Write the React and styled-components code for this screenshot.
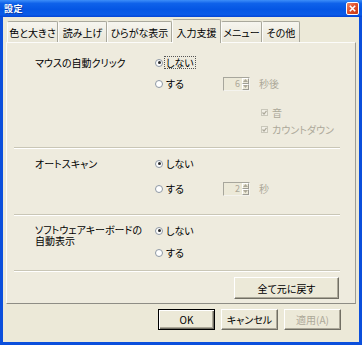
import React from 'react';
import styled, { createGlobalStyle, css } from 'styled-components';

const Global = createGlobalStyle`
  html, body { margin: 0; padding: 0; background: #ECE9D8; }
  body {
    font-family: "Noto Sans CJK JP", "Noto Sans", sans-serif;
    font-size: 10px;
    color: #000;
  }
  * { box-sizing: border-box; }
`;

const Window = styled.div`
  width: 362px;
  height: 345px;
  display: flex;
  flex-direction: column;
  background: #0B4FDC;
  font-feature-settings: "palt";
`;

const TitleBar = styled.div`
  height: 17px;
  flex: none;
  display: flex;
  align-items: center;
  justify-content: space-between;
  padding: 0 3px 0 4px;
  background: linear-gradient(to bottom, #3D8EF9 0%, #0F62EA 20%, #0556E4 55%, #0A5BE8 85%, #0444D4 100%);
`;

const Title = styled.span`
  color: #fff;
  font-size: 9px;
  font-weight: bold;
  letter-spacing: 0.5px;
  text-shadow: 1px 1px 0 #0B3AA8;
`;

const CloseButton = styled.div`
  width: 13px;
  height: 13px;
  border: 1px solid #fff;
  border-radius: 2px;
  background: linear-gradient(135deg, #F08A6A 0%, #E0512C 45%, #C93A12 100%);
  display: flex;
  align-items: center;
  justify-content: center;
`;

const Body = styled.div`
  flex: 1;
  margin: 0 3px 3px;
  background: #ECE9D8;
  padding: 2px 3px 0;
  display: flex;
  flex-direction: column;
`;

const TabStrip = styled.div`
  display: flex;
  align-items: flex-end;
  padding-left: 1px;
  height: 23px;
  position: relative;
  z-index: 1;
`;

const Tab = styled.div`
  width: ${p => p.$w}px;
  height: 21px;
  padding-top: 4px;
  text-align: center;
  font-size: 10px;
  line-height: 13px;
  white-space: nowrap;
  background: linear-gradient(to bottom, #F6F5EF, #E9E6D8);
  border: 1px solid #A9A89C;
  border-bottom: none;
  border-left-color: #FCFCFA;
  border-radius: 2px 2px 0 0;
  ${p => p.$active && css`
    height: 24px;
    margin-bottom: -1px;
    padding-top: 6px;
    background: #EEEBDE;
  `}
`;

const Panel = styled.div`
  background: #EEEBDE;
  border: 1px solid;
  border-color: #FCFCFA #9D9C94 #8E8D85 #FCFCFA;
  padding: 0 15px 0 7px;
  display: flex;
  flex-direction: column;
`;

const Section = styled.div`
  display: flex;
  padding: ${p => p.$pad};
  padding-left: 21px;
`;

const Label = styled.div`
  width: 120px;
  flex: none;
  line-height: ${p => (p.$multi ? '11px' : '21px')};
  padding-top: ${p => (p.$multi ? '4px' : '0')};
  white-space: nowrap;
`;

const Options = styled.div`
  display: flex;
  flex-direction: column;
  gap: ${p => p.$gap}px;
`;

const OptionRow = styled.div`
  height: 21px;
  display: flex;
  align-items: center;
`;

const RadioItem = styled.label`
  display: flex;
  align-items: center;
  width: 68px;
  color: #000;
`;

const RadioCircle = styled.span`
  width: 8px;
  height: 8px;
  border-radius: 50%;
  border: 1px solid #8E98A4;
  background: #fff;
  margin-right: 2px;
  display: flex;
  align-items: center;
  justify-content: center;
  &::after {
    content: '';
    width: 3px;
    height: 3px;
    border-radius: 50%;
    background: ${p => (p.$checked ? '#2A2A2A' : 'transparent')};
  }
`;

const RadioText = styled.span`
  padding: 0 1px;
  line-height: 11px;
  outline: ${p => (p.$focus ? '1px dotted #555' : 'none')};
`;

const Spinner = styled.div`
  width: 27px;
  height: 14px;
  display: flex;
  border: 1px solid;
  border-color: #A7A69C #F4F3EE #F4F3EE #A7A69C;
  background: #ECE9D8;
`;

const SpinValue = styled.span`
  flex: 1;
  text-align: right;
  padding-right: 2px;
  color: #ACA899;
  font-size: 9px;
  line-height: 12px;
`;

const SpinButtons = styled.div`
  width: 7px;
  display: flex;
  flex-direction: column;
`;

const SpinButton = styled.div`
  flex: 1;
  background: #ECE9D8;
  border: 1px solid;
  border-color: #FFFFFF #9D9C94 #9D9C94 #FFFFFF;
  display: flex;
  align-items: center;
  justify-content: center;
`;

const Suffix = styled.span`
  margin-left: 9px;
  color: #ACA899;
`;

const CheckList = styled.div`
  display: flex;
  flex-direction: column;
  margin-top: 10px;
  margin-left: 106px;
`;

const CheckRow = styled.div`
  height: 17px;
  display: flex;
  align-items: center;
  color: #ACA899;
`;

const CheckBox = styled.span`
  width: 7px;
  height: 7px;
  border: 1px solid #C9C7BA;
  background: #F1EFE6;
  margin-right: 4px;
  display: flex;
  align-items: center;
  justify-content: center;
`;

const Separator = styled.div`
  height: 2px;
  border-top: 1px solid #C9C6B6;
  border-bottom: 1px solid #FFFFFF;
`;

const ResetRow = styled.div`
  display: flex;
  justify-content: flex-end;
  padding: 5px 1px 4px 0;
`;

const Button = styled.button`
  width: ${p => p.$w}px;
  height: ${p => p.$h}px;
  font-family: inherit;
  font-size: 10px;
  font-feature-settings: "palt";
  background: #ECE9D8;
  color: ${p => (p.$disabled ? '#ACA899' : '#000')};
  border: 1px solid;
  border-color: #FFFFFF #716F64 #716F64 #FFFFFF;
  box-shadow: inset -1px -1px 0 #ACA899;
  padding: 0;
  ${p => p.$default && css`
    border: 1px solid #000;
    box-shadow: inset 1px 1px 0 #fff, inset -1px -1px 0 #716F64, inset -2px -2px 0 #ACA899;
  `}
`;

const ButtonRow = styled.div`
  display: flex;
  justify-content: flex-end;
  gap: 6px;
  margin-top: 5px;
  padding-right: 15px;
`;

const Up = () => (
  <svg width="5" height="3" viewBox="0 0 5 3"><path d="M0 3 L2.5 0 L5 3 Z" fill="#ACA899" /></svg>
);
const Down = () => (
  <svg width="5" height="3" viewBox="0 0 5 3"><path d="M0 0 L2.5 3 L5 0 Z" fill="#ACA899" /></svg>
);

const Spin = ({ value }) => (
  <Spinner>
    <SpinValue>{value}</SpinValue>
    <SpinButtons>
      <SpinButton><Up /></SpinButton>
      <SpinButton><Down /></SpinButton>
    </SpinButtons>
  </Spinner>
);

const Radio = ({ checked, focus, children }) => (
  <RadioItem>
    <RadioCircle $checked={checked} />
    <RadioText $focus={focus}>{children}</RadioText>
  </RadioItem>
);

const Check = ({ children }) => (
  <CheckRow>
    <CheckBox>
      <svg width="5" height="5" viewBox="0 0 5 5"><path d="M0.5 2.5 L2 4 L4.5 0.8" stroke="#ACA899" strokeWidth="1.2" fill="none" /></svg>
    </CheckBox>
    {children}
  </CheckRow>
);

const tabs = [
  { label: '色と大きさ', w: 51 },
  { label: '読み上げ', w: 49 },
  { label: 'ひらがな表示', w: 65 },
  { label: '入力支援', w: 49, active: true },
  { label: 'メニュー', w: 41 },
  { label: 'その他', w: 38 },
];

export default function App() {
  return (
    <>
      <Global />
      <Window>
        <TitleBar>
          <Title>設定</Title>
          <CloseButton>
            <svg width="7" height="7" viewBox="0 0 7 7">
              <path d="M0.8 0.8 L6.2 6.2 M6.2 0.8 L0.8 6.2" stroke="#fff" strokeWidth="1.6" />
            </svg>
          </CloseButton>
        </TitleBar>
        <Body>
          <TabStrip>
            {tabs.map(t => (
              <Tab key={t.label} $w={t.w} $active={t.active}>{t.label}</Tab>
            ))}
          </TabStrip>
          <Panel>
            <Section $pad="9px 0 9px">
              <Label>マウスの自動クリック</Label>
              <Options $gap={0}>
                <OptionRow><Radio checked focus>しない</Radio></OptionRow>
                <OptionRow>
                  <Radio>する</Radio>
                  <Spin value="6" />
                  <Suffix>秒後</Suffix>
                </OptionRow>
                <CheckList>
                  <Check>音</Check>
                  <Check>カウントダウン</Check>
                </CheckList>
              </Options>
            </Section>
            <Separator />
            <Section $pad="4px 0 15px">
              <Label>オートスキャン</Label>
              <Options $gap={4}>
                <OptionRow><Radio checked>しない</Radio></OptionRow>
                <OptionRow>
                  <Radio>する</Radio>
                  <Spin value="2" />
                  <Suffix>秒</Suffix>
                </OptionRow>
              </Options>
            </Section>
            <Separator />
            <Section $pad="4px 0 7px">
              <Label $multi>ソフトウェアキーボードの<br />自動表示</Label>
              <Options $gap={1}>
                <OptionRow><Radio checked>しない</Radio></OptionRow>
                <OptionRow><Radio>する</Radio></OptionRow>
              </Options>
            </Section>
            <Separator />
            <ResetRow>
              <Button $w={105} $h={22}>全て元に戻す</Button>
            </ResetRow>
          </Panel>
          <ButtonRow>
            <Button $w={57} $h={21} $default>OK</Button>
            <Button $w={57} $h={21}>キャンセル</Button>
            <Button $w={57} $h={21} $disabled>適用(A)</Button>
          </ButtonRow>
        </Body>
      </Window>
    </>
  );
}
